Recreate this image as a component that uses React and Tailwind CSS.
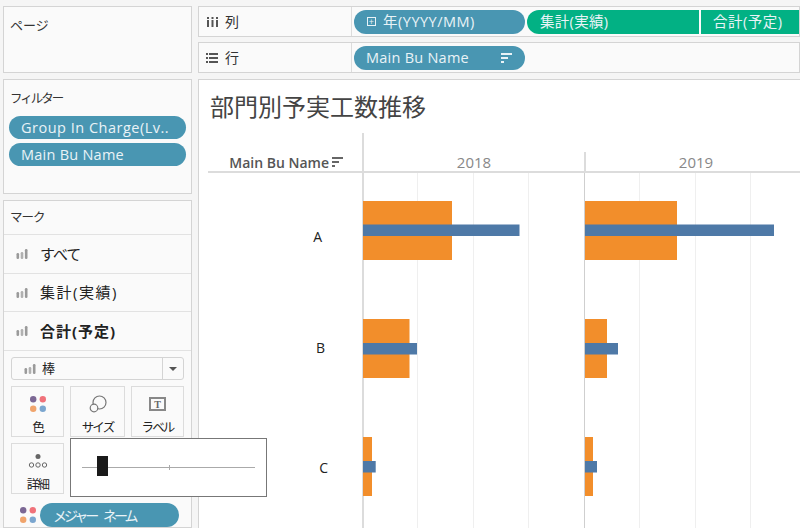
const font = "font-['Open_Sans','Noto_Sans_CJK_JP',sans-serif]";

function BarIcon({ className = '' }) {
  return (
    <svg width="12" height="10" viewBox="0 0 12 10" className={className} fill="#9a9a9a">
      <rect x="0.5" y="4" width="2.6" height="6" rx="1.2" />
      <rect x="4.7" y="3" width="2.6" height="7" rx="1.2" fill="#b0b0b0" />
      <rect x="8.9" y="0" width="2.6" height="10" rx="1.2" />
    </svg>
  );
}

function SortIcon({ color }) {
  return (
    <svg width="11" height="10" viewBox="0 0 11 10" fill={color}>
      <rect x="0" y="0" width="11" height="2" />
      <rect x="0" y="4" width="7" height="2" />
      <rect x="0" y="8" width="3" height="2" />
    </svg>
  );
}

function Dots() {
  return (
    <svg width="16" height="16" viewBox="0 0 16 16">
      <circle cx="3.2" cy="3.2" r="3.2" fill="#7b6794" />
      <circle cx="12.8" cy="3.2" r="3.2" fill="#f0727a" />
      <circle cx="3.2" cy="12.8" r="3.2" fill="#f0a46c" />
      <circle cx="12.8" cy="12.8" r="3.2" fill="#7ba6cf" />
    </svg>
  );
}

function Pill({ children, className = '' }) {
  return (
    <div className={`rounded-full bg-[#4996b2] text-[#e9f3f7] text-[14.5px] flex items-center whitespace-nowrap ${className}`}>
      {children}
    </div>
  );
}

function MarkRow({ label, bold, height, textClass = '' }) {
  return (
    <div className={`flex items-center pl-[12px] border-t border-[#e2e2e2] ${height}`}>
      <BarIcon />
      <span className={`ml-[12px] text-[15px] text-[#222] ${textClass} ${bold ? 'font-bold' : ''}`}>{label}</span>
    </div>
  );
}

function MarkBtn({ icon, label, className = '' }) {
  return (
    <div className={`h-[51px] border border-[#dcdcdc] flex flex-col items-center justify-between pt-[5px] ${className}`}>
      <div className="h-6 flex items-center justify-center">{icon}</div>
      <span className="text-[12.5px] leading-4 text-[#222] tracking-[-1.8px]">{label}</span>
    </div>
  );
}

function Panel({ className = '', children }) {
  return <div className={`border border-[#d4d4d4] bg-[#fafafa] ${className}`}>{children}</div>;
}

function ShelfLabel({ icon, label }) {
  return (
    <div className="w-[153px] shrink-0 h-full flex items-center pl-[4px] border-r border-[#dcdcdc] text-[14px] text-[#333]">
      <span className="w-[18px] flex justify-center">{icon}</span>
      <span className="ml-[4px]">{label}</span>
    </div>
  );
}

function Plot() {
  // one year pane is 222px wide, x and y here are page coordinates
  const rows = [
    { y: 201, by: 224.5, a: [89, 92], b: [156.5, 189] },
    { y: 319, by: 343, a: [46.5, 22], b: [54, 33] },
    { y: 437, by: 461, a: [9, 8], b: [12.7, 12] },
  ];
  const panes = [363, 585];
  return (
    <svg width="438" height="355" viewBox="362 173 438 355" className="block">
      {[417.5, 473.5, 528.5, 639.5, 695.5, 750.5].map((x) => (
        <line key={x} x1={x} x2={x} y1="173" y2="528" stroke="#efefef" />
      ))}
      <line x1="363" x2="363" y1="173" y2="528" stroke="#dcdcdc" strokeWidth="2" />
      <line x1="584.5" x2="584.5" y1="173" y2="528" stroke="#cfcfcf" />
      {rows.map((r) =>
        panes.map((x, i) => (
          <g key={`${r.y}-${x}`}>
            <rect x={x} y={r.y} width={r.a[i]} height="59" fill="#f28e2b" />
            <rect x={x} y={r.by} width={r.b[i]} height="11.5" fill="#4e79a7" />
          </g>
        ))
      )}
    </svg>
  );
}

export default function App() {
  return (
    <div className={`w-[800px] h-[528px] overflow-hidden bg-[#f5f5f5] flex gap-[5px] pt-[6px] pl-[3px] relative ${font}`}>
      <div className="w-[189px] shrink-0 mr-[1px] flex flex-col gap-[6px]">
        <Panel className="h-[67px] pl-[6px] pt-[5px]">
          <span className="text-[13px] text-[#333]">ページ</span>
        </Panel>
        <Panel className="h-[115px] pt-[9px]">
          <div className="pl-[6px] text-[12.5px] leading-5 text-[#333] tracking-[-2px]">フィルター</div>
          <div className="mt-[7px] px-[5px] flex flex-col gap-[4px]">
            <Pill className="h-[23px] pl-[12px] tracking-[0.5px]">Group In Charge(Lv..</Pill>
            <Pill className="h-[23px] pl-[12px] tracking-[0.25px]">Main Bu Name</Pill>
          </div>
        </Panel>
        <Panel className="flex-1">
          <div className="h-[33px] pt-[2px] flex items-center pl-[6px] text-[12.5px] text-[#333] tracking-[-1px]">マーク</div>
          <MarkRow label="すべて" height="h-[39px]" textClass="tracking-[-1px]" />
          <MarkRow label="集計(実績)" height="h-[38px]" textClass="tracking-[1.5px]" />
          <MarkRow label="合計(予定)" height="h-[39px]" textClass="tracking-[1px]" bold />
          <div className="border-t border-[#e2e2e2] pt-[6px] px-[7px]">
            <div className="h-[23px] border border-[#d4d4d4] rounded-[3px] flex items-center">
              <BarIcon className="ml-[12px]" />
              <span className="ml-[6px] text-[13px] text-[#222] flex-1">棒</span>
              <div className="w-[21px] h-full border-l border-[#d4d4d4] flex items-center justify-center">
                <div className="border-x-[4px] border-x-transparent border-t-[4px] border-t-[#555]" />
              </div>
            </div>
            <div className="mt-[6px] grid grid-cols-[53px_55px_53px] gap-x-[6px] gap-y-[6px]">
              <MarkBtn label="色" icon={<Dots />} />
              <MarkBtn
                label="サイズ"
                icon={
                  <svg width="18" height="18" viewBox="0 0 18 18" fill="none" stroke="#777" strokeWidth="1.2">
                    <circle cx="10.5" cy="7.5" r="6.5" />
                    <circle cx="5" cy="13" r="3.8" fill="#fafafa" />
                  </svg>
                }
              />
              <MarkBtn
                label="ラベル"
                icon={
                  <div className="w-[17px] h-[14px] border-2 border-[#888] flex items-center justify-center font-['Liberation_Serif',serif] font-bold text-[10px] text-[#666]">T</div>
                }
              />
              <MarkBtn
                label="詳細"
                icon={
                  <svg width="20" height="16" viewBox="0 0 20 16" fill="none" stroke="#666">
                    <circle cx="10" cy="3.5" r="2.5" fill="#666" stroke="none" />
                    <circle cx="3.5" cy="12" r="2.2" />
                    <circle cx="10" cy="12" r="2.2" />
                    <circle cx="16.5" cy="12" r="2.2" />
                  </svg>
                }
              />
            </div>
            <div className="mt-[9px] flex items-center">
              <div className="ml-[9px] mr-[4px]"><Dots /></div>
              <Pill className="h-[24px] w-[139px] pl-[13px] text-[14px] tracking-[-3px] [word-spacing:6px]">メジャー ネーム</Pill>
            </div>
          </div>
        </Panel>
      </div>

      <div className="flex-1 min-w-0 flex flex-col">
        <Panel className="h-[31px] mb-[5px] flex items-center shrink-0 overflow-hidden">
          <ShelfLabel
            label="列"
            icon={
              <svg width="11" height="11" viewBox="0 0 11 11" fill="#555">
                <rect x="0" y="4" width="2" height="7" />
                <rect x="4.5" y="4" width="2" height="7" />
                <rect x="9" y="4" width="2" height="7" />
                <rect x="0" y="1" width="2" height="2" />
                <rect x="4.5" y="1" width="2" height="2" />
                <rect x="9" y="1" width="2" height="2" />
              </svg>
            }
          />
          <div className="flex items-center ml-[2px] gap-[2px]">
            <Pill className="h-[24px] w-[171px] pl-[13px] shrink-0 tracking-[0.5px]">
              <span className="w-[9px] h-[9px] border border-[#e9f3f7] mr-[7px] flex items-center justify-center text-[9px] leading-none">+</span>
              年(YYYY/MM)
            </Pill>
            <Pill className="h-[24px] w-[172px] pl-[13px] shrink-0 !bg-[#02b184] rounded-r-none tracking-[0.3px]">集計(実績)</Pill>
            <Pill className="h-[24px] w-[120px] pl-[12px] shrink-0 !bg-[#02b184] rounded-none tracking-[0.5px]">合計(予定)</Pill>
          </div>
        </Panel>
        <Panel className="h-[31px] mb-[6px] flex items-center shrink-0">
          <ShelfLabel
            label="行"
            icon={
              <svg width="12" height="10" viewBox="0 0 12 10" fill="#555">
                <rect x="0" y="0" width="2" height="2" />
                <rect x="3" y="0" width="9" height="2" />
                <rect x="0" y="4" width="2" height="2" />
                <rect x="3" y="4" width="9" height="2" />
                <rect x="0" y="8" width="2" height="2" />
                <rect x="3" y="8" width="9" height="2" />
              </svg>
            }
          />
          <Pill className="h-[24px] w-[171px] ml-[2px] pl-[12px] pr-[13px] justify-between tracking-[0.25px]">
            Main Bu Name
            <SortIcon color="#e9f3f7" />
          </Pill>
        </Panel>
        <div className="flex-1 border border-[#d4d4d4] border-r-0 border-b-0 bg-white flex flex-col overflow-hidden">
          <div className="h-[53px] shrink-0 pl-[11px] pt-[9px] text-[24px] leading-[36px] text-[#444]">部門別予実工数推移</div>
          <div className="h-[40px] shrink-0 flex pl-[9px]">
            <div className="w-[154px] shrink-0 flex items-center justify-end pr-[19px] pt-[20px] gap-[3px] text-[14px] font-semibold text-[#555] border-b-2 border-[#dcdcdc]">
              Main Bu Name
              <SortIcon color="#666" />
            </div>
            <div className="w-[222px] shrink-0 border-l-2 border-b-2 border-[#dcdcdc] flex items-center justify-center pt-[20px] text-[15px] text-[#888]">2018</div>
            <div className="flex-1 flex border-b-2 border-[#dcdcdc]">
              <div className="w-[222px] border-l-2 border-[#dcdcdc] mt-[19px] flex items-center justify-center pt-[1px] text-[15px] text-[#888]">2019</div>
            </div>
          </div>
          <div className="flex-1 flex min-h-0">
            <div className="w-[163px] shrink-0 text-[14px] text-[#222]">
              <div className="h-[120px] pt-[53px] pr-[40px] text-right">A</div>
              <div className="h-[120px] pt-[44px] pr-[37px] text-right">B</div>
              <div className="h-[115px] pt-[44px] pr-[34px] text-right">C</div>
            </div>
            <Plot />
          </div>
        </div>
      </div>

      <div className="absolute left-[70px] top-[438px] w-[197px] h-[59px] border border-[#777] bg-white flex items-center px-[11px]">
        <div className="relative w-full h-[1px] bg-[#aaa]">
          <div className="absolute left-[15px] -top-[11px] w-[11px] h-[20px] bg-[#1a1a1a]" />
          <div className="absolute left-[87px] -top-[2px] w-px h-[5px] bg-[#aaa]" />
        </div>
      </div>
    </div>
  );
}
